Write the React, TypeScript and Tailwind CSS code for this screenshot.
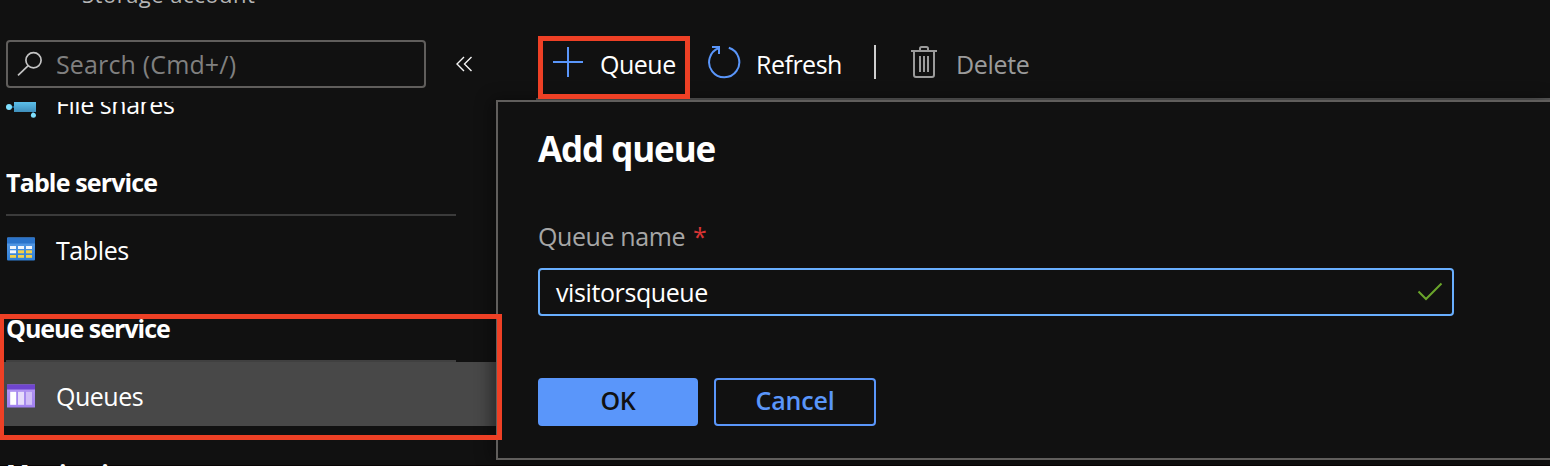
import React from "react";

function SearchIcon() {
  return (
    <svg className="block size-[28px] shrink-0" viewBox="0 0 28 28" fill="none" stroke="#c4c4c4" strokeWidth="1.7">
      <circle cx="16.500" cy="10.3" r="7.6" />
      <path d="M11 15.8 1 25.4" />
    </svg>
  );
}

function FileShareIcon() {
  return (
    <svg className="block h-[16px] w-[32px] shrink-0" viewBox="0 0 32 16">
      <defs>
        <linearGradient id="share" x1="0" y1="0" x2="0" y2="1">
          <stop offset="0" stopColor="#5cc0ea" />
          <stop offset="1" stopColor="#3f8fbc" />
        </linearGradient>
      </defs>
      <path d="M3 5h6M27 10v3" stroke="#1c6f9c" strokeWidth="1.5" />
      <rect x="8" y="0" width="22" height="10" fill="url(#share)" />
      <circle cx="3" cy="5" r="3" fill="#7fe0ff" />
      <circle cx="27.4" cy="13.3" r="2.5" fill="#7fe0ff" />
    </svg>
  );
}

function TableIcon() {
  return (
    <svg className="block h-[24px] w-[30px] shrink-0" viewBox="0 0 30 24">
      <defs>
        <linearGradient id="table" x1="0" y1="0" x2="0" y2="1">
          <stop offset="0" stopColor="#5f9fe8" />
          <stop offset="1" stopColor="#2f7fd6" />
        </linearGradient>
      </defs>
      <rect x="1" y="0.5" width="28" height="23" rx="1" fill="url(#table)" />
      <path d="M1 6.5V1.5a1 1 0 0 1 1-1h26a1 1 0 0 1 1 1v5z" fill="#2b74cb" />
      <g fill="#f2f6fc">
        <rect x="4" y="9" width="6" height="3" />
        <rect x="12" y="9" width="6" height="3" />
        <rect x="20" y="9" width="6" height="3" />
        <rect x="4" y="13.3" width="6" height="3" />
      </g>
      <g fill="#f5cf45">
        <rect x="12" y="13.3" width="6" height="3" />
        <rect x="20" y="13.3" width="6" height="3" />
        <rect x="4" y="18" width="6" height="2.8" />
        <rect x="12" y="18" width="6" height="2.8" />
        <rect x="20" y="18" width="6" height="2.8" />
      </g>
    </svg>
  );
}

function QueueIcon() {
  return (
    <svg className="block h-[24px] w-[30px] shrink-0" viewBox="0 0 30 24">
      <defs>
        <linearGradient id="queue" x1="0" y1="0" x2="0" y2="1">
          <stop offset="0" stopColor="#b69af2" />
          <stop offset="1" stopColor="#a07ff0" />
        </linearGradient>
      </defs>
      <rect x="1" y="0.5" width="28" height="23" rx="0.5" fill="url(#queue)" />
      <rect x="1" y="0.5" width="28" height="5" fill="#6f45cf" />
      <rect x="3.6" y="7.4" width="22.8" height="14" fill="#a68aee" />
      <rect x="4.2" y="7.8" width="6" height="13" fill="#ffffff" />
      <rect x="12" y="7.8" width="6" height="13" fill="#e6dcfb" />
      <rect x="20" y="7.8" width="6" height="13" fill="#d0bdf7" />
    </svg>
  );
}

function CollapseIcon() {
  return (
    <svg className="block h-[16px] w-[18px] shrink-0" viewBox="0 0 18 16" fill="none" stroke="#f4f4f4" strokeWidth="1.4">
      <path d="M9 1 2 8l7 7M16.500 1 9.500 8l7 7" />
    </svg>
  );
}

function AddIcon() {
  return (
    <svg className="block size-[32px] shrink-0" viewBox="0 0 32 32" fill="none" stroke="#5a96fa" strokeWidth="2">
      <path d="M16 1v30M1 16h30" />
    </svg>
  );
}

function RefreshIcon() {
  return (
    <svg className="block size-[34px] shrink-0" viewBox="0 0 34 34" fill="none" stroke="#5a96fa" strokeWidth="2">
      <path d="M21.800 2.800A15.100 15.100 0 1 1 12 3" />
      <path d="M5 2h7v7" />
    </svg>
  );
}

function TrashIcon() {
  return (
    <svg className="block h-[32px] w-[26px] shrink-0" viewBox="0 0 26 32" fill="none" stroke="#9b9b9b" strokeWidth="2">
      <path d="M0 5h26M9 5V2.500a1.500 1.500 0 0 1 1.500-1.500h5a1.500 1.500 0 0 1 1.500 1.500V5M3 5v24a2 2 0 0 0 2 2h16a2 2 0 0 0 2-2V5M9 10v16M13 10v16M17 10v16" />
    </svg>
  );
}

function CheckIcon() {
  return (
    <svg className="block h-[20px] w-[26px] shrink-0" viewBox="0 0 26 20" fill="none" stroke="#6aa52b" strokeWidth="2">
      <path d="M1.500 9.500 9 17 24.500 1.500" />
    </svg>
  );
}

function Sidebar() {
  return (
    <aside className="flex h-[466px] w-[496px] shrink-0 flex-col overflow-hidden">
      <div className="flex h-[40px] shrink-0 items-start pl-[82px]">
        <p className="-mt-[18px] text-[22px] leading-[24px] tracking-[0.5px] text-[#b5b5b5]">Storage account</p>
      </div>
      <div className="flex h-[48px] shrink-0 items-center pl-[6px]">
        <div className="flex h-[48px] w-[420px] items-center gap-[11px] rounded-[4px] border-2 border-[#605e5c] pl-[9px]">
          <SearchIcon />
          <span className="text-[25px] leading-[44px] tracking-[0.15px] text-[#808080]">Search (Cmd+/)</span>
        </div>
        <button className="ml-[29px]">
          <CollapseIcon />
        </button>
      </div>
      <nav className="mt-[14px] flex flex-1 flex-col overflow-hidden">
        <div className="flex h-[30px] shrink-0 items-start gap-[18px] pl-[6px]">
          <FileShareIcon />
          <span className="-mt-[14px] text-[25px] leading-[32px] tracking-[-0.45px]">File shares</span>
        </div>
        <div className="ml-[6px] mt-[34px] h-[50px] w-[450px] shrink-0 border-b-2 border-[#3b3b3b] text-[25px] font-bold leading-[32px] tracking-[-0.85px]">
          Table service
        </div>
        <div className="flex h-[66px] shrink-0 items-center gap-[20px] pl-[6px]">
          <TableIcon />
          <span className="mt-[2px] text-[25px] leading-[32px] tracking-[-0.4px]">Tables</span>
        </div>
        <div className="ml-[6px] mt-[30px] h-[50px] w-[450px] shrink-0 border-b-2 border-[#404040] text-[25px] font-bold leading-[32px] tracking-[-1px]">
          Queue service
        </div>
        <div className="flex h-[64px] shrink-0 items-center gap-[20px] bg-[#484848] pl-[6px]">
          <span className="mt-[3px]"><QueueIcon /></span>
          <span className="mt-[4px] text-[25px] leading-[32px] tracking-[-0.5px]">Queues</span>
        </div>
        <div className="ml-[6px] mt-[31px] text-[25px] font-bold leading-[32px] tracking-[-0.8px]">Monitoring</div>
      </nav>
    </aside>
  );
}

function Toolbar() {
  return (
    <div className="ml-[40px] flex h-[100px] shrink-0 items-start border-b-2 border-[#565656] pt-[40px] text-[25px] leading-[48px] tracking-[-0.5px]">
      <button className="ml-[16px] flex items-start">
        <span className="mt-[6px]"><AddIcon /></span>
        <span className="ml-[16px] w-[79px] text-left">Queue</span>
      </button>
      <button className="ml-[28px] flex items-start">
        <span className="mt-[5px]"><RefreshIcon /></span>
        <span className="ml-[15px] w-[89px] text-left">Refresh</span>
      </button>
      <div className="ml-[29px] mt-[5px] h-[34px] w-[2px] bg-[#cfcfcf]" />
      <button className="ml-[35px] flex items-start text-[#9b9b9b]">
        <span className="mt-[6px]"><TrashIcon /></span>
        <span className="ml-[19px] tracking-[-0.35px]">Delete</span>
      </button>
    </div>
  );
}

function AddQueuePanel() {
  return (
    <section className="h-[360px] shrink-0 border-y-2 border-l-2 border-[#605e5c] bg-[#111111] pl-[40px] shadow-[-4px_0_16px_rgba(0,0,0,0.45)]">
      <h1 className="mt-[23px] text-[35px] font-bold leading-[48px] tracking-[-1.1px]">Add queue</h1>
      <label className="mt-[46px] flex h-[34px] items-start text-[25px] leading-[34px] tracking-[-0.4px] text-[#a6a6a6]">
        <span className="w-[155px]">Queue name</span>
        <span className="text-[#d83434]">*</span>
      </label>
      <div className="mt-[15px] flex h-[48px] w-[916px] items-center justify-between rounded-[4px] border-2 border-[#69afff] pl-[16px] pr-[9px]">
        <span className="text-[25px] leading-[44px] tracking-[-0.4px]">visitorsqueue</span>
        <CheckIcon />
      </div>
      <div className="mt-[62px] flex gap-[16px] text-[25px] font-semibold leading-[40px] tracking-[-0.2px]">
        <button className="h-[48px] w-[160px] rounded-[4px] border-2 border-[#5a96fa] bg-[#5a96fa] pb-[4px] text-[#111111]">OK</button>
        <button className="h-[48px] w-[162px] rounded-[4px] border-2 border-[#5a96fa] pb-[4px] text-[#5a96fa]">Cancel</button>
      </div>
    </section>
  );
}

export default function App() {
  return (
    <div className="relative flex h-[466px] w-[1550px] overflow-hidden whitespace-nowrap bg-[#111111] font-['Open_Sans',sans-serif] text-white shadow-[inset_0_-1px_0_#080404]">
      <Sidebar />
      <main className="flex min-w-0 flex-1 flex-col">
        <Toolbar />
        <AddQueuePanel />
      </main>
      <div className="absolute left-[538px] top-[36px] h-[63px] w-[152px] border-[5px] border-[#ee4025]" />
      <div className="absolute -left-px top-[314px] h-[126px] w-[503px] border-[5px] border-[#ee4025]" />
    </div>
  );
}
